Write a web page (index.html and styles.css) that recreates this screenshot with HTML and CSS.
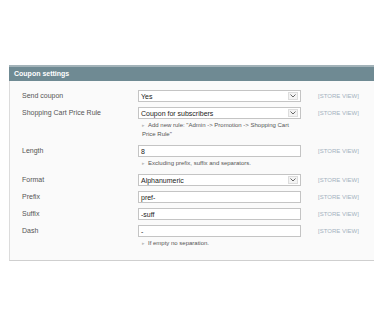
FILE: index.html
```html
<!DOCTYPE html>
<html>
<head>
    <meta charset="utf-8">
    <title>Coupon settings</title>
    <link rel="stylesheet" href="styles.css">
</head>
<body>
<div class="section">
    <div class="section_head">Coupon settings</div>
    <div class="section_body">
        <div class="row">
            <span class="label">Send coupon</span>
            <div class="value">
                <div class="field">Yes<span class="arrow"><svg width="6" height="4" viewBox="0 0 6 4"><path d="M0.5 0.5 L3 3 L5.5 0.5" fill="none" stroke="#666" stroke-width="1"/></svg></span></div>
            </div>
            <span class="scope">[STORE VIEW]</span>
        </div>
        <div class="row">
            <span class="label">Shopping Cart Price Rule</span>
            <div class="value">
                <div class="field">Coupon for subscribers<span class="arrow"><svg width="6" height="4" viewBox="0 0 6 4"><path d="M0.5 0.5 L3 3 L5.5 0.5" fill="none" stroke="#666" stroke-width="1"/></svg></span></div>
                <p class="note">Add new rule: "Admin -&gt; Promotion -&gt; Shopping Cart Price Rule"</p>
            </div>
            <span class="scope">[STORE VIEW]</span>
        </div>
        <div class="row">
            <span class="label">Length</span>
            <div class="value">
                <div class="field">8</div>
                <p class="note">Excluding prefix, suffix and separators.</p>
            </div>
            <span class="scope">[STORE VIEW]</span>
        </div>
        <div class="row">
            <span class="label">Format</span>
            <div class="value">
                <div class="field">Alphanumeric<span class="arrow"><svg width="6" height="4" viewBox="0 0 6 4"><path d="M0.5 0.5 L3 3 L5.5 0.5" fill="none" stroke="#666" stroke-width="1"/></svg></span></div>
            </div>
            <span class="scope">[STORE VIEW]</span>
        </div>
        <div class="row">
            <span class="label">Prefix</span>
            <div class="value">
                <div class="field">pref-</div>
            </div>
            <span class="scope">[STORE VIEW]</span>
        </div>
        <div class="row">
            <span class="label">Suffix</span>
            <div class="value">
                <div class="field">-suff</div>
            </div>
            <span class="scope">[STORE VIEW]</span>
        </div>
        <div class="row dash_row">
            <span class="label">Dash</span>
            <div class="value">
                <div class="field">-</div>
                <p class="note">If empty no separation.</p>
            </div>
            <span class="scope">[STORE VIEW]</span>
        </div>
    </div>
</div>
</body>
</html>
```

FILE: styles.css
```css
body {
    margin: 0;
    background: #ffffff;
    font-family: "Liberation Sans", Arial, sans-serif;
    font-size: 7px;
    color: #3c3c3c;
}

.section {
    margin: 65px 0 0 9px;
}

.section_head {
    background: #6f8a93;
    border-top: 2px solid #a3b3b9;
    color: #ffffff;
    font-weight: bold;
    font-size: 7px;
    height: 14px;
    line-height: 14px;
    padding-left: 5px;
}

.section_body {
    background: #fafafa;
    border-left: 1px solid #dcdcdc;
    border-bottom: 1px solid #cfcfcf;
    padding: 9px 0 11px 12px;
}

.row {
    display: flex;
    align-items: flex-start;
    margin-bottom: 5px;
}

.row.dash_row {
    margin-top: 1px;
    margin-bottom: 0;
}

.label {
    width: 116px;
    line-height: 12px;
    color: #555555;
}

.value {
    width: 163px;
}

.field {
    position: relative;
    height: 10px;
    line-height: 11px;
    border: 1px solid #c4c4c4;
    background: #ffffff;
    padding-left: 2px;
    color: #222222;
}

.arrow {
    position: absolute;
    right: 2px;
    top: 1px;
    width: 8px;
    height: 6px;
    border: 1px solid #dddddd;
    background: #f3f3f3;
    display: flex;
    align-items: center;
    justify-content: center;
}

.note {
    margin: 2px 0 1px 4px;
    font-size: 6px;
    line-height: 9px;
    color: #555555;
}

.note::before {
    content: "\25B8";
    color: #bbbbbb;
    margin-right: 3px;
    font-size: 5px;
}

.scope {
    margin-left: 17px;
    line-height: 12px;
    font-size: 6px;
    color: #a4b2c0;
}
```
